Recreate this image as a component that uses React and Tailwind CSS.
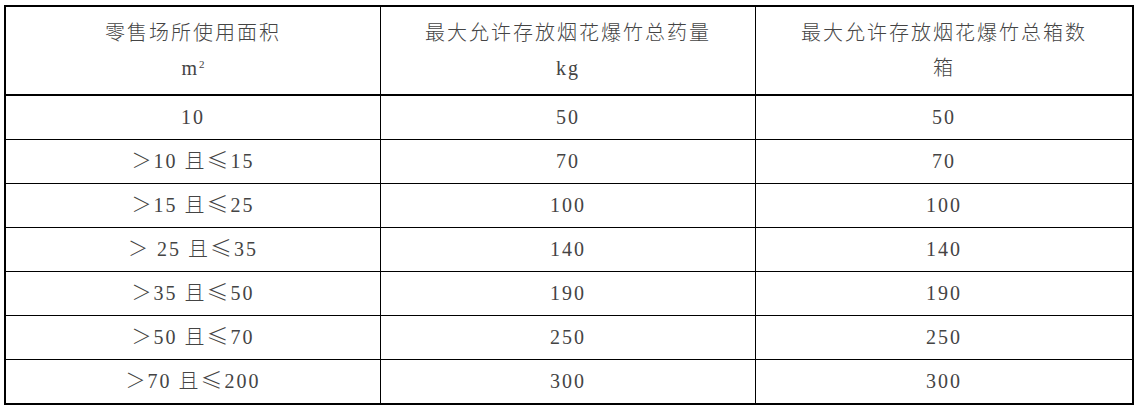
import React from "react";

const rows = [
  ["10", "50", "50"],
  [["＞10 且", "≤", "15"], "70", "70"],
  [["＞15 且", "≤", "25"], "100", "100"],
  [["＞ 25 且", "≤", "35"], "140", "140"],
  [["＞35 且", "≤", "50"], "190", "190"],
  [["＞50 且", "≤", "70"], "250", "250"],
  [["＞70 且", "≤", "200"], "300", "300"],
];

const font = { fontFamily: '"Liberation Serif", "Noto Sans CJK SC", serif' };
const cjk = { fontFamily: '"Noto Sans CJK SC", sans-serif' };

function Cell({ children, w, last, data }) {
  return (
    <div
      className={`flex items-center justify-center text-center ${data ? "pb-[2px]" : ""} ${last ? "" : "border-r border-black"} ${w}`}
    >
      {children}
    </div>
  );
}

function First({ v }) {
  if (typeof v === "string") return v;
  return (
    <span>
      {v[0]}
      <span className="text-[22px] leading-none" style={cjk}>{v[1]}</span>
      {v[2]}
    </span>
  );
}

export default function App() {
  return (
    <div className="w-[1139px] h-[413px] bg-white pl-[4px] pt-[5px]">
      <div
        className="w-[1130px] h-[400px] border-2 border-black flex flex-col text-[20px] text-[#444] tracking-[2px] font-light"
        style={font}
      >
        <div className="flex h-[89px] border-b-2 border-black leading-[35px]">
          <Cell w="w-[375px]">
            <div>
              <div>零售场所使用面积</div>
              <div>
                m<sup className="text-[11px] -top-[0.6em] tracking-normal">2</sup>
              </div>
            </div>
          </Cell>
          <Cell w="w-[375px]">
            <div>
              <div>最大允许存放烟花爆竹总药量</div>
              <div>kg</div>
            </div>
          </Cell>
          <Cell w="w-[376px]" last>
            <div>
              <div>最大允许存放烟花爆竹总箱数</div>
              <div>箱</div>
            </div>
          </Cell>
        </div>
        {rows.map((r, i) => (
          <div
            key={i}
            className={`flex ${i === rows.length - 1 ? "h-[43px]" : "h-[44px] border-b border-black"}`}
          >
            <Cell data w="w-[375px]"><First v={r[0]} /></Cell>
            <Cell data w="w-[375px]">{r[1]}</Cell>
            <Cell data w="w-[376px]" last>{r[2]}</Cell>
          </div>
        ))}
      </div>
    </div>
  );
}
